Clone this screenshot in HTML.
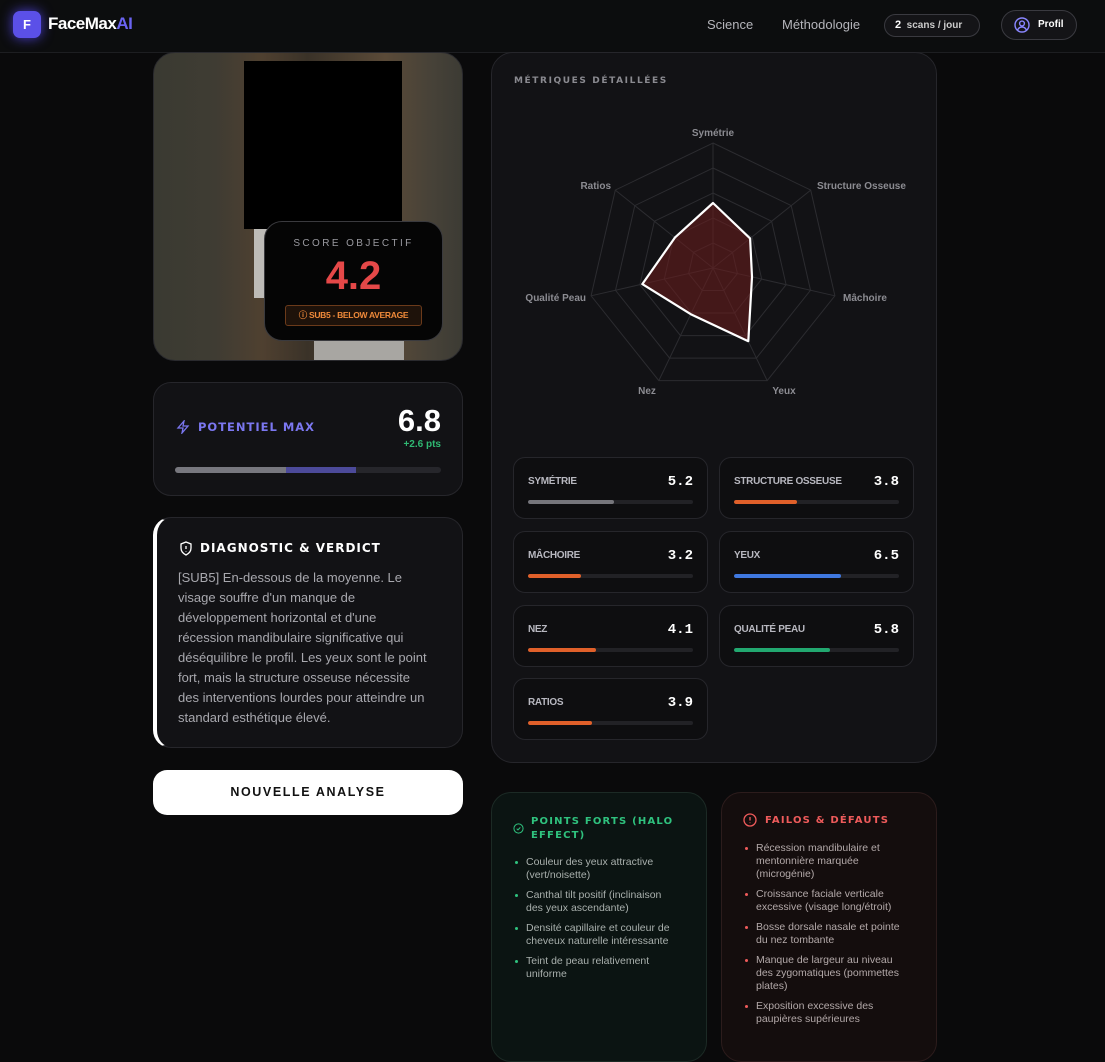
<!DOCTYPE html>
<html><head><meta charset="utf-8"><style>
*{box-sizing:border-box;margin:0;padding:0}
body{width:1105px;height:1047px;background:#0a0a0b;font-family:"Liberation Sans",sans-serif;color:#fff;position:relative;overflow:hidden}
.a{position:absolute}
.hd{position:absolute;left:0;top:0;width:1105px;height:53px;background:#0c0d0e;border-bottom:1px solid #1d1e21}
.card{position:absolute;background:#121215;border:1px solid #26262b;border-radius:18px}
.wide{font-family:"DejaVu Sans",sans-serif;font-weight:bold;letter-spacing:1.2px}
.tile{position:absolute;width:195px;height:62px;background:#0e0e10;border:1px solid #26262b;border-radius:12px}
.tile .l{position:absolute;left:14px;top:18px;font-size:10px;font-weight:bold;color:#b8b8c0;letter-spacing:-0.3px}
.tile .v{position:absolute;right:14px;top:16px;font-family:"Liberation Mono",monospace;font-weight:bold;font-size:14px;color:#fff}
.tile .bar{position:absolute;left:14px;right:14px;top:42px;height:4px;border-radius:2px;background:#222226;overflow:hidden}
.tile .bar i{display:block;height:100%;border-radius:2px}
ul{list-style:none}
li{position:relative;padding-left:12px;font-size:10.5px;line-height:13px;margin-bottom:7px}
li:before{content:"";position:absolute;left:1px;top:5px;width:3px;height:3px;border-radius:50%}
.g li:before{background:#2fc27e}
.r li:before{background:#ef5b5b}
</style></head><body>
<div class="hd">
  <div class="a" style="left:13px;top:11px;width:28px;height:27px;border-radius:7px;background:#5b50e8;box-shadow:0 0 12px #4b3fd0;font-weight:bold;font-size:13px;text-align:center;line-height:27px">F</div>
  <div class="a" style="left:48px;top:14px;font-weight:bold;font-size:17px;letter-spacing:-0.5px">FaceMax<span style="color:#6a63f0">AI</span></div>
  <div class="a" style="left:707px;top:17px;font-size:13px;color:#b5b5bb">Science</div>
  <div class="a" style="left:782px;top:17px;font-size:13px;color:#b5b5bb">Méthodologie</div>
  <div class="a" style="left:884px;top:14px;width:96px;height:23px;border:1px solid #3a3a40;border-radius:12px;background:#141417;font-size:10px;font-weight:bold;color:#ccc;line-height:21px;padding-left:10px"><span style="color:#fff;font-size:11px">2</span>&nbsp;&nbsp;scans / jour</div>
  <div class="a" style="left:1001px;top:10px;width:76px;height:30px;border:1px solid #3a3a40;border-radius:15px;background:#141417;font-size:10px;font-weight:bold;line-height:28px;padding-left:36px">Profil
    <svg class="a" style="left:12px;top:6px" width="16" height="16" viewBox="0 0 16 16" fill="none" stroke="#8a86ff" stroke-width="1.4"><circle cx="8" cy="8" r="7"/><circle cx="8" cy="6.5" r="2.4"/><path d="M3.5 13c1-2 2.6-3 4.5-3s3.5 1 4.5 3"/></svg></div>
</div>

<!-- photo -->
<div class="a" style="left:153px;top:52px;width:310px;height:309px;border-radius:22px;overflow:hidden;border:1px solid #2a2a2e;background:linear-gradient(90deg,#3a3a32 0%,#3f3c33 20%,#4f4030 35%,#3a3228 50%,#5a4a38 75%,#474238 90%,#3c3b34 100%)">
  <div class="a" style="left:100px;top:175px;width:30px;height:70px;background:#bdbbb7"></div>
  <div class="a" style="left:160px;top:288px;width:90px;height:25px;background:#a8a6a2"></div>
  <div class="a" style="left:90px;top:8px;width:158px;height:168px;background:#000"></div>
  <div class="a" style="left:110px;top:168px;width:179px;height:120px;background:#050505;border:1px solid #3a3a3e;border-radius:18px">
    <div class="a" style="left:0;width:177px;top:16px;text-align:center;font-size:10px;letter-spacing:2.4px;color:#9a9aa0">SCORE OBJECTIF</div>
    <div class="a" style="left:0;width:177px;top:32px;text-align:center;font-size:40px;font-weight:bold;color:#e54848">4.2</div>
    <div class="a" style="left:20px;top:83px;width:137px;height:21px;border:1px solid #6b3a1a;border-radius:3px;background:#1e120a;font-size:8.5px;font-weight:bold;color:#f08a3a;line-height:19px;text-align:center;letter-spacing:-0.3px">ⓘ SUB5 - BELOW AVERAGE</div>
  </div>
</div>

<!-- potentiel -->
<div class="card" style="left:153px;top:382px;width:310px;height:114px">
  <svg class="a" style="left:22px;top:37px" width="14" height="14" viewBox="0 0 14 14" fill="none" stroke="#7b77f0" stroke-width="1.3"><path d="M8 1L2 8h5l-1 5 6-7H7z"/></svg>
  <div class="a wide" style="left:44px;top:37px;font-size:11.5px;color:#7b77f0;letter-spacing:1px">POTENTIEL MAX</div>
  <div class="a" style="right:21px;top:20px;font-size:31px;font-weight:bold">6.8</div>
  <div class="a" style="right:21px;top:56px;font-size:10px;font-weight:bold;color:#2fb872">+2.6 pts</div>
  <div class="a" style="left:21px;top:84px;width:266px;height:6px;border-radius:3px;background:#26262b;overflow:hidden"><div style="position:absolute;left:0;width:111px;height:6px;background:#77777e"></div><div style="position:absolute;left:111px;width:70px;height:6px;background:#4c4a9a"></div></div>
</div>

<!-- diagnostic -->
<div class="card" style="left:153px;top:517px;width:310px;height:231px;border-left:4px solid #fff">
  <svg class="a" style="left:22px;top:23px" width="14" height="15" viewBox="0 0 14 15" fill="none" stroke="#fff" stroke-width="1.3"><path d="M7 1l5 2v4c0 3-2 5.5-5 7-3-1.5-5-4-5-7V3z"/><path d="M7 5v3M7 10v.5"/></svg>
  <div class="a wide" style="left:43px;top:23px;font-size:12px;letter-spacing:1px">DIAGNOSTIC &amp; VERDICT</div>
  <div class="a" style="left:21px;top:50px;width:252px;font-size:13px;line-height:20px;color:#a8a8ae">[SUB5] En-dessous de la moyenne. Le visage souffre d'un manque de développement horizontal et d'une récession mandibulaire significative qui déséquilibre le profil. Les yeux sont le point fort, mais la structure osseuse nécessite des interventions lourdes pour atteindre un standard esthétique élevé.</div>
</div>

<div class="a" style="left:153px;top:770px;width:310px;height:45px;background:#fff;border-radius:14px;color:#111;font-weight:bold;font-size:12.5px;letter-spacing:1.6px;text-align:center;line-height:45px">NOUVELLE ANALYSE</div>

<!-- right card -->
<div class="card" style="left:491px;top:52px;width:446px;height:711px;border-radius:22px">
  <div class="a wide" style="left:22px;top:23px;font-size:9px;color:#8a8a90;letter-spacing:1.6px">MÉTRIQUES DÉTAILLÉES</div>
</div>
<svg class="a" style="left:0;top:0" width="1105" height="1047">
  <g transform="translate(713 268)" fill="none" stroke="#2c2c30" stroke-width="1">
    <polygon points="0,-125 97.7,-77.9 121.9,27.8 54.2,112.6 -54.2,112.6 -121.9,27.8 -97.7,-77.9"/>
    <polygon points="0,-100 78.2,-62.4 97.5,22.3 43.4,90.1 -43.4,90.1 -97.5,22.3 -78.2,-62.4"/>
    <polygon points="0,-75 58.6,-46.8 73.1,16.7 32.5,67.6 -32.5,67.6 -73.1,16.7 -58.6,-46.8"/>
    <polygon points="0,-50 39.1,-31.2 48.7,11.1 21.7,45 -21.7,45 -48.7,11.1 -39.1,-31.2"/>
    <polygon points="0,-25 19.5,-15.6 24.4,5.6 10.8,22.5 -10.8,22.5 -24.4,5.6 -19.5,-15.6"/>
    <path d="M0 0L0 -125M0 0L97.7 -77.9M0 0L121.9 27.8M0 0L54.2 112.6M0 0L-54.2 112.6M0 0L-121.9 27.8M0 0L-97.7 -77.9"/>
    <polygon points="0,-65 37.1,-29.6 39,8.9 35.3,73.2 -22.2,46.2 -70.7,16.1 -38.1,-30.4" fill="rgba(110,30,30,0.55)" stroke="#fff" stroke-width="2.2" stroke-linejoin="round"/>
  </g>
  <g font-family="Liberation Sans" font-size="10" font-weight="bold" fill="#8c8c92">
    <text x="713" y="136" text-anchor="middle">Symétrie</text>
    <text x="817" y="189">Structure Osseuse</text>
    <text x="843" y="301">Mâchoire</text>
    <text x="784" y="394" text-anchor="middle">Yeux</text>
    <text x="647" y="394" text-anchor="middle">Nez</text>
    <text x="586" y="301" text-anchor="end">Qualité Peau</text>
    <text x="611" y="189" text-anchor="end">Ratios</text>
  </g>
</svg>

<div class="tile" style="left:513px;top:457px"><div class="l">SYMÉTRIE</div><div class="v">5.2</div><div class="bar"><i style="width:52%;background:#76767c"></i></div></div>
<div class="tile" style="left:719px;top:457px"><div class="l">STRUCTURE OSSEUSE</div><div class="v">3.8</div><div class="bar"><i style="width:38%;background:#e0602a"></i></div></div>
<div class="tile" style="left:513px;top:531px"><div class="l">MÂCHOIRE</div><div class="v">3.2</div><div class="bar"><i style="width:32%;background:#e0602a"></i></div></div>
<div class="tile" style="left:719px;top:531px"><div class="l">YEUX</div><div class="v">6.5</div><div class="bar"><i style="width:65%;background:#3f78e0"></i></div></div>
<div class="tile" style="left:513px;top:605px"><div class="l">NEZ</div><div class="v">4.1</div><div class="bar"><i style="width:41%;background:#e0602a"></i></div></div>
<div class="tile" style="left:719px;top:605px"><div class="l">QUALITÉ PEAU</div><div class="v">5.8</div><div class="bar"><i style="width:58%;background:#22a870"></i></div></div>
<div class="tile" style="left:513px;top:678px"><div class="l">RATIOS</div><div class="v">3.9</div><div class="bar"><i style="width:39%;background:#e0602a"></i></div></div>

<!-- bottom cards -->
<div class="a g" style="left:491px;top:792px;width:216px;height:270px;background:#0b1412;border:1px solid #1c2a25;border-radius:20px">
  <svg class="a" style="left:21px;top:30px" width="11" height="11" viewBox="0 0 12 12" fill="none" stroke="#2fc27e" stroke-width="1.1"><circle cx="6" cy="6" r="5"/><path d="M4 6.2l1.4 1.3L8 4.8"/></svg>
  <div class="a wide" style="left:39px;top:22px;width:150px;font-size:10px;line-height:14px;color:#2fc27e;letter-spacing:1.2px">POINTS FORTS (HALO EFFECT)</div>
  <ul class="a" style="left:22px;top:63px;width:160px;color:#a9b0ad">
    <li>Couleur des yeux attractive (vert/noisette)</li>
    <li>Canthal tilt positif (inclinaison des yeux ascendante)</li>
    <li>Densité capillaire et couleur de cheveux naturelle intéressante</li>
    <li>Teint de peau relativement uniforme</li>
  </ul>
</div>
<div class="a r" style="left:721px;top:792px;width:216px;height:270px;background:#140d0d;border:1px solid #2c1c1c;border-radius:20px">
  <svg class="a" style="left:21px;top:20px" width="14" height="14" viewBox="0 0 14 14" fill="none" stroke="#ef5b5b" stroke-width="1.3"><circle cx="7" cy="7" r="6"/><path d="M7 4v3.5M7 9.5v.6"/></svg>
  <div class="a wide" style="left:43px;top:22px;font-size:10px;color:#ef5b5b;letter-spacing:1.2px">FAILOS &amp; DÉFAUTS</div>
  <ul class="a" style="left:22px;top:49px;width:162px;color:#b3a9a9">
    <li>Récession mandibulaire et mentonnière marquée (microgénie)</li>
    <li>Croissance faciale verticale excessive (visage long/étroit)</li>
    <li>Bosse dorsale nasale et pointe du nez tombante</li>
    <li>Manque de largeur au niveau des zygomatiques (pommettes plates)</li>
    <li>Exposition excessive des paupières supérieures</li>
  </ul>
</div>
</body></html>
